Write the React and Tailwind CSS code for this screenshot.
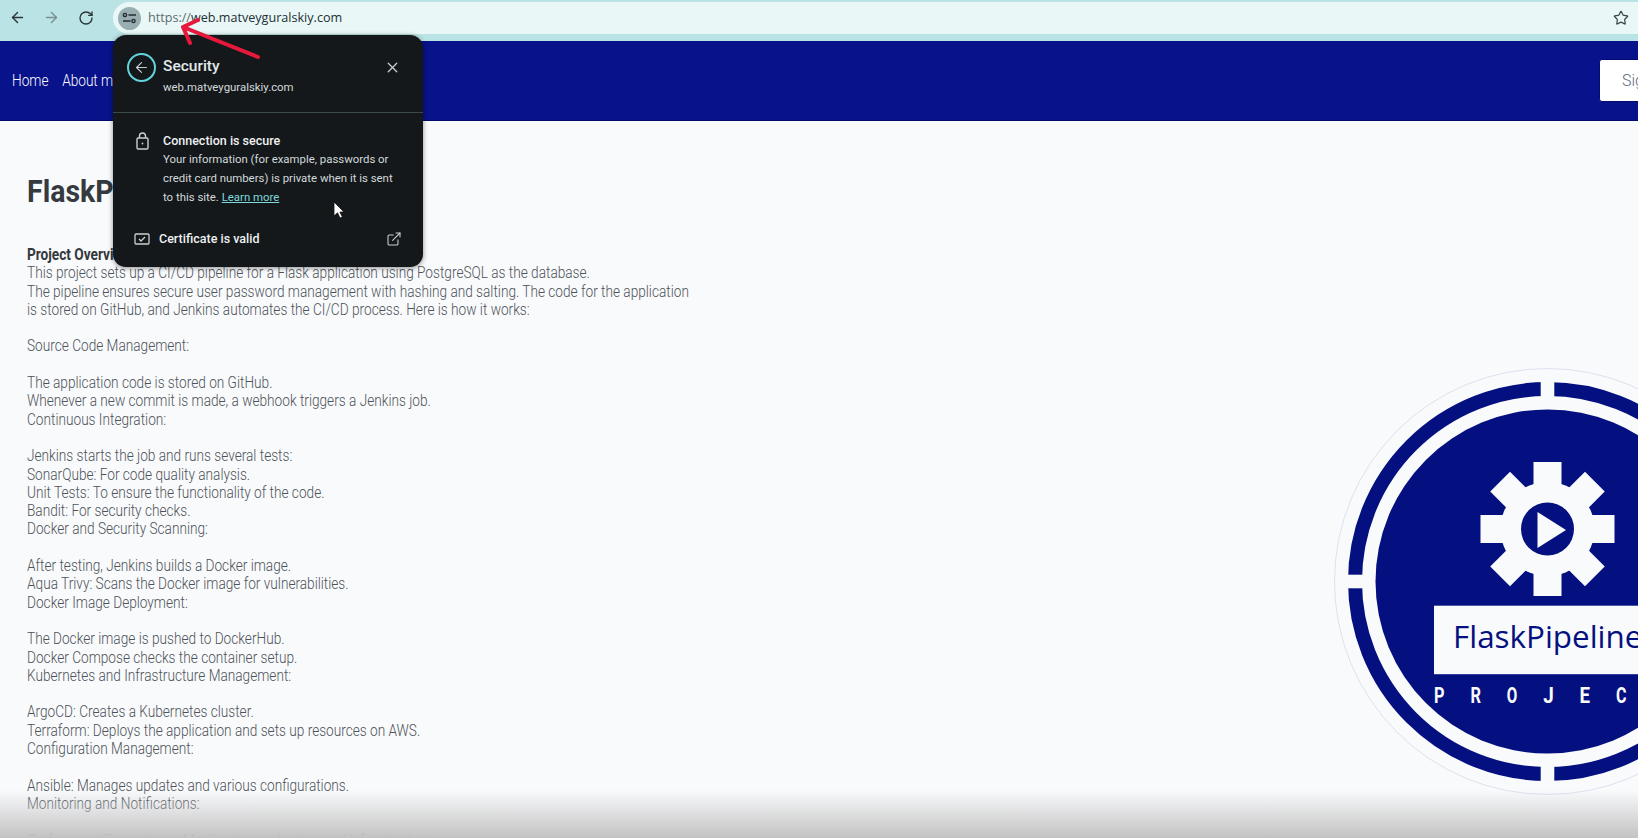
import React from "react";
import { ArrowLeft, ArrowRight, RotateCw, Star, X, ExternalLink } from "lucide-react";

const lines = [
  "This project sets up a CI/CD pipeline for a Flask application using PostgreSQL as the database.",
  "The pipeline ensures secure user password management with hashing and salting. The code for the application",
  "is stored on GitHub, and Jenkins automates the CI/CD process. Here is how it works:",
  "",
  "Source Code Management:",
  "",
  "The application code is stored on GitHub.",
  "Whenever a new commit is made, a webhook triggers a Jenkins job.",
  "Continuous Integration:",
  "",
  "Jenkins starts the job and runs several tests:",
  "SonarQube: For code quality analysis.",
  "Unit Tests: To ensure the functionality of the code.",
  "Bandit: For security checks.",
  "Docker and Security Scanning:",
  "",
  "After testing, Jenkins builds a Docker image.",
  "Aqua Trivy: Scans the Docker image for vulnerabilities.",
  "Docker Image Deployment:",
  "",
  "The Docker image is pushed to DockerHub.",
  "Docker Compose checks the container setup.",
  "Kubernetes and Infrastructure Management:",
  "",
  "ArgoCD: Creates a Kubernetes cluster.",
  "Terraform: Deploys the application and sets up resources on AWS.",
  "Configuration Management:",
  "",
  "Ansible: Manages updates and various configurations.",
  "Monitoring and Notifications:",
  "",
  "Grafana and Prometheus: Monitor the application and infrastructure.",
];

const navy = "#04107f";
const pale = "#f9fafc";

// Gear teeth, one rotated copy per 45 degrees
const teeth = [0, 45, 90, 135, 180, 225, 270, 315];

const Logo = () => (
  <svg viewBox="1334 368 427 427" className="w-[427px] h-[427px] shrink-0 overflow-visible">
    <circle cx="1547.5" cy="581.5" r="213" fill={pale} stroke="#c9d0e4" strokeWidth="0.6" />
    <circle cx="1547.5" cy="581.5" r="192.5" fill="none" stroke={navy} strokeWidth="14" />
    <rect x="1540.7" y="375" width="13.6" height="30" fill={pale} />
    <rect x="1540.7" y="758" width="13.6" height="30" fill={pale} />
    <rect x="1341" y="574.7" width="30" height="13.6" fill={pale} />
    <circle cx="1547.5" cy="581.5" r="172" fill={navy} />
    {teeth.map((a) => (
      <rect key={a} x="1533.5" y="462" width="28" height="40" fill={pale} transform={`rotate(${a} 1547.5 529)`} />
    ))}
    <circle cx="1547.5" cy="529" r="47" fill={pale} />
    <circle cx="1547.5" cy="529" r="26.5" fill={navy} />
    <polygon points="1537.5,512 1566,530 1537.5,548" fill={pale} />
    <rect x="1434" y="605.7" width="228" height="68.5" fill={pale} />
    <text x="1453" y="648" fill={navy} fontSize="31.4" fontFamily="'Open Sans', sans-serif">FlaskPipeline</text>
    {["P", "R", "O", "J", "E", "C", "T"].map((c, i) => (
      <text key={c} x={1434 + i * 36.4} y="702.5" fill={pale} fontSize="22" fontWeight="700" fontFamily="Roboto, sans-serif" textLength="10.5" lengthAdjust="spacingAndGlyphs">{c}</text>
    ))}
  </svg>
);

const Popup = () => (
  <div className="absolute left-[113px] top-[35px] w-[310px] h-[232px] rounded-[13px] bg-[#14181b] text-[#e3e8ea] font-['Roboto',sans-serif] shadow-[0_1px_5px_rgba(0,0,0,0.45)]">
    <div className="flex h-[78px] border-b border-[#3b4a48] pl-[14px] pr-[22px] pt-[18px]">
      <div className="flex h-[29px] w-[29px] items-center justify-center rounded-full border-2 border-[#62d3d8]">
        <ArrowLeft size={17} strokeWidth={1.6} className="text-[#c9d0d2]" />
      </div>
      <div className="ml-[7px] flex-1">
        <div className="mt-[1px] text-[15.5px] leading-[24px] font-medium">Security</div>
        <div className="mt-[1px] text-[11.4px] leading-[16px] text-[#d3d8da]">web.matveyguralskiy.com</div>
      </div>
      <X size={17} strokeWidth={1.8} className="mt-[6px] text-[#c9d0d2]" />
    </div>
    <div className="flex pl-[23px] pr-[10px] pt-[18px]">
      <svg width="13" height="18" viewBox="0 0 13 18" fill="none" stroke="#c9d0d2" strokeWidth="1.4" className="mt-[1px] shrink-0">
        <rect x="1" y="6" width="11" height="11" rx="1.2" />
        <path d="M3.5 6V4a3 3 0 0 1 6 0v2" />
        <circle cx="6.5" cy="11.5" r="0.9" fill="#c9d0d2" stroke="none" />
      </svg>
      <div className="ml-[14px] text-[11.4px] leading-[19px] text-[#d3d8da]">
        <div className="text-[12.5px] font-medium text-[#eef1f2]">Connection is secure</div>
        <div>Your information (for example, passwords or</div>
        <div>credit card numbers) is private when it is sent</div>
        <div>to this site. <span className="text-[#7fd8dd] underline">Learn more</span></div>
      </div>
    </div>
    <div className="mt-[23px] flex items-center pl-[21px] pr-[19px]">
      <svg width="16" height="14" viewBox="0 0 16 14" fill="none" stroke="#c9d0d2" strokeWidth="1.3">
        <rect x="1" y="2" width="14" height="10" rx="1" />
        <path d="M5 7l2 2 4-4" />
      </svg>
      <div className="ml-[9px] flex-1 text-[12.5px] font-medium text-[#eef1f2]">Certificate is valid</div>
      <ExternalLink size={16} strokeWidth={1.6} className="mr-[2px] text-[#c9d0d2]" />
    </div>
  </div>
);

export default function App() {
  return (
    <div className="relative h-[838px] w-[1638px] overflow-hidden bg-[#f9fafc] font-['Roboto',sans-serif]">
      {/* Browser toolbar */}
      <div className="flex h-[41px] items-start bg-[#b9e3e4] pl-[9px] pt-[2px]">
        <ArrowLeft size={17} strokeWidth={2} className="mt-[7px] text-[#2b3436]" />
        <ArrowRight size={17} strokeWidth={2} className="mt-[7px] ml-[17px] text-[#7d8e90]" />
        <RotateCw size={16} strokeWidth={2} className="mt-[8px] ml-[18px] text-[#2b3436]" />
        <div className="ml-[19px] flex h-[32px] flex-1 items-center rounded-l-full bg-[#e9f7f7] pl-[5px] pr-[9px]">
          <div className="flex h-[23px] w-[23px] items-center justify-center rounded-full bg-[#98aeb0]">
            <svg width="15" height="12" viewBox="0 0 15 12" fill="none" stroke="#222b2d" strokeWidth="1.4">
              <circle cx="3" cy="3" r="1.6" />
              <path d="M6.5 3H14M1 9h7.5" />
              <circle cx="11.5" cy="9" r="1.6" />
            </svg>
          </div>
          <span className="ml-[7px] font-['Open_Sans',sans-serif] text-[12.6px]">
            <span className="text-[#5b6d70]">https://</span>
            <span className="text-[#243033]">web.matveyguralskiy.com</span>
          </span>
          <Star size={16} strokeWidth={1.8} className="ml-auto text-[#3a4547]" />
        </div>
      </div>

      {/* Site navbar */}
      <div className="flex h-[80px] items-center border-b border-[#040a6e] bg-[#08128b] pl-[12px]">
        <div className="flex origin-left scale-x-[0.853] gap-[16px] text-[16px] font-light text-white">
          <a>Home</a>
          <a>About me</a>
        </div>
        <button className="ml-auto -mr-[40px] h-[43px] w-[79px] rounded-[3px] border border-[#040a6e] bg-white pl-[22px] text-left text-[16px] font-light text-[#5f6b85]">
          Sign up
        </button>
      </div>

      {/* Page body */}
      <div className="flex pl-[27px]">
        <div className="w-[1307px] shrink-0">
          <h1 className="mt-[50px] origin-left scale-x-[0.89] text-[32px] leading-[40px] font-bold text-[#343a40]">FlaskPipeline Project</h1>
          <div className="mt-[35px] origin-left scale-x-[0.853] text-[16px] leading-[18.3px] font-light text-[#4d5358]">
            <div className="font-bold text-[#33383c]">Project Overview:</div>
            {lines.map((line, i) => (
              <div key={i} className="h-[18.3px]">{line}</div>
            ))}
          </div>
        </div>
        <div className="mt-[247px]">
          <Logo />
        </div>
      </div>

      {/* Video bottom shade */}
      <div className="pointer-events-none absolute inset-x-0 bottom-0 h-[48px] bg-gradient-to-b from-transparent to-[#c2c2c2]" />

      <Popup />

      {/* Red annotation arrow */}
      <svg className="absolute left-[170px] top-[12px]" width="100" height="55" viewBox="170 12 100 55" fill="none" stroke="#e6193c" strokeWidth="4" strokeLinecap="round" strokeLinejoin="round">
        <path d="M258 57L183 27M198 20L183 27L190 43" />
      </svg>

      {/* Mouse cursor */}
      <svg className="absolute left-[333px] top-[201px]" width="12" height="18" viewBox="0 0 12 18">
        <path d="M1 1v14l3.5-3.2L7 17l2.4-1-2.5-5H11z" fill="#fff" stroke="#111" strokeWidth="0.8" />
      </svg>
    </div>
  );
}
